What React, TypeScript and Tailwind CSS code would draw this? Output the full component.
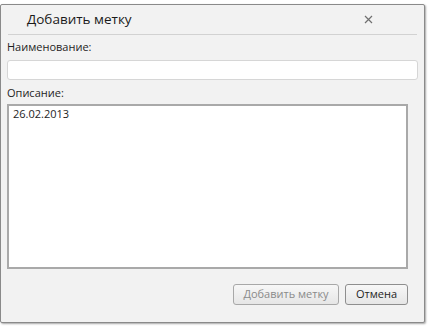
import React from "react";

const App = () => {
  return (
    <div className="h-[331px] w-[437px] bg-white pt-[4px] font-['Open_Sans',sans-serif] text-[11px] text-[#1e1e1e]">
      <div className="flex h-[319px] w-[425px] flex-col rounded-[2px] border border-[#8a8a8a] bg-[#f2f2f2] shadow-[1px_1px_2px_rgba(0,0,0,0.35)]">
        <div className="flex h-[29px] items-center justify-between pl-[26px] pr-[51px]">
          <span className="text-[13.5px] leading-none text-[#1a1a1a]">Добавить метку</span>
          <svg width="9" height="9" viewBox="0 0 9 9" className="text-[#707070]">
            <path d="M1 1L8 8M8 1L1 8" stroke="currentColor" strokeWidth="1.2" />
          </svg>
        </div>
        <div className="mx-[7px] h-px bg-[#d2d2d2]" />
        <div className="flex flex-1 flex-col px-[6px]">
          <label className="mt-[4px] leading-[16px]">Наименование:</label>
          <div className="mt-[5px] h-[20px] w-[411px] rounded-[3px] border border-[#d6d6d6] bg-white" />
          <label className="mt-[5px] leading-[16px]">Описание:</label>
          <div className="mt-[3px] h-[165px] w-[401px] border-2 border-[#a9a9a9] bg-white px-[4px]">
            <span className="leading-[16px]">26.02.2013</span>
          </div>
          <div className="mt-[15px] flex w-[401px] justify-end gap-[6px]">
            <button className="h-[21px] w-[106px] rounded-[3px] border border-[#a8a8a8] bg-gradient-to-b from-[#f7f7f7] to-[#e6e6e6] text-[11px] text-[#8a8a8a]">
              Добавить метку
            </button>
            <button className="h-[21px] w-[63px] rounded-[3px] border border-[#8e8e8e] bg-gradient-to-b from-[#f7f7f7] to-[#e6e6e6] text-[11px] text-[#1e1e1e]">
              Отмена
            </button>
          </div>
        </div>
      </div>
    </div>
  );
};

export default App;
